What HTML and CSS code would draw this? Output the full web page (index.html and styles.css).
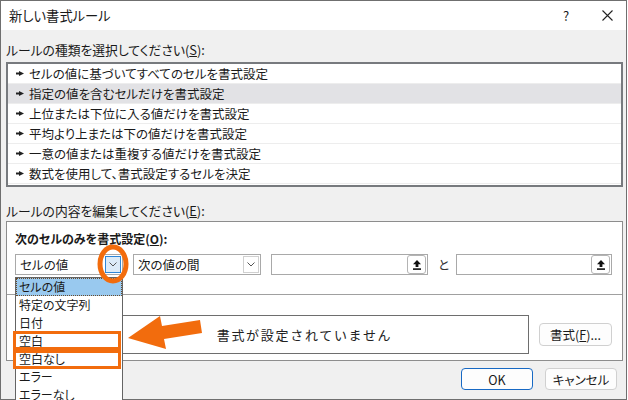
FILE: index.html
```html
<!DOCTYPE html>
<html lang="ja">
<head>
    <meta charset="UTF-8">
    <title>新しい書式ルール</title>
    <link rel="stylesheet" href="styles.css">
</head>
<body>

    <div class="window">
        <!-- タイトルバー -->
        <div class="titlebar">
            <span class="title">新しい書式ルール</span>
            <span class="help">?</span>
            <span class="close">
                <svg width="11" height="11" viewBox="0 0 11 11"><path d="M0.5 0.5L10.5 10.5M10.5 0.5L0.5 10.5" stroke="#222" stroke-width="1.1" fill="none"/></svg>
            </span>
        </div>

        <div class="content">
            <div class="label">ルールの種類を選択してください(<u>S</u>):</div>
            <ul class="rule-list">
                <li><svg class="bullet" width="8" height="5" viewBox="0 0 8 5"><rect x="0" y="1.5" width="4" height="2" fill="#222"/><path d="M3 0L8 2.5L3 5Z" fill="#222"/></svg>セルの値に基づいてすべてのセルを書式設定</li>
                <li class="selected"><svg class="bullet" width="8" height="5" viewBox="0 0 8 5"><rect x="0" y="1.5" width="4" height="2" fill="#222"/><path d="M3 0L8 2.5L3 5Z" fill="#222"/></svg>指定の値を含むセルだけを書式設定</li>
                <li><svg class="bullet" width="8" height="5" viewBox="0 0 8 5"><rect x="0" y="1.5" width="4" height="2" fill="#222"/><path d="M3 0L8 2.5L3 5Z" fill="#222"/></svg>上位または下位に入る値だけを書式設定</li>
                <li><svg class="bullet" width="8" height="5" viewBox="0 0 8 5"><rect x="0" y="1.5" width="4" height="2" fill="#222"/><path d="M3 0L8 2.5L3 5Z" fill="#222"/></svg>平均より上または下の値だけを書式設定</li>
                <li><svg class="bullet" width="8" height="5" viewBox="0 0 8 5"><rect x="0" y="1.5" width="4" height="2" fill="#222"/><path d="M3 0L8 2.5L3 5Z" fill="#222"/></svg>一意の値または重複する値だけを書式設定</li>
                <li><svg class="bullet" width="8" height="5" viewBox="0 0 8 5"><rect x="0" y="1.5" width="4" height="2" fill="#222"/><path d="M3 0L8 2.5L3 5Z" fill="#222"/></svg>数式を使用して、書式設定するセルを決定</li>
            </ul>

            <div class="label label-edit">ルールの内容を編集してください(<u>E</u>):</div>
            <div class="edit-panel">
                <div class="cond-title">次のセルのみを書式設定(<u>O</u>):</div>
                <div class="cond-row">
                    <div class="combo combo-type">
                        <span class="combo-text">セルの値</span>
                        <span class="drop drop-active"><svg width="8" height="5" viewBox="0 0 8 5"><path d="M0.5 0.5L4 4L7.5 0.5" stroke="#555" fill="none"/></svg></span>
                    </div>
                    <div class="combo combo-op">
                        <span class="combo-text">次の値の間</span>
                        <span class="drop"><svg width="8" height="5" viewBox="0 0 8 5"><path d="M0.5 0.5L4 4L7.5 0.5" stroke="#555" fill="none"/></svg></span>
                    </div>
                    <div class="ref-field ref-first">
                        <span class="ref-btn"><svg width="8" height="10" viewBox="0 0 8 10"><path d="M4 0L8 4.2H5.4V7H2.6V4.2H0Z" fill="#111"/><rect x="0" y="8.3" width="8" height="1.6" fill="#111"/></svg></span>
                    </div>
                    <span class="and">と</span>
                    <div class="ref-field ref-second">
                        <span class="ref-btn"><svg width="8" height="10" viewBox="0 0 8 10"><path d="M4 0L8 4.2H5.4V7H2.6V4.2H0Z" fill="#111"/><rect x="0" y="8.3" width="8" height="1.6" fill="#111"/></svg></span>
                    </div>
                </div>
                <div class="divider"></div>
                <div class="preview-row">
                    <span class="preview-label">プレビュー:</span>
                    <div class="preview-box">書式が設定されていません</div>
                    <button class="btn btn-format">書式(<u>F</u>)...</button>
                </div>
            </div>

            <div class="footer">
                <button class="btn btn-ok">OK</button>
                <button class="btn btn-cancel">キャンセル</button>
            </div>
        </div>
    </div>

    <!-- 開いたドロップダウン -->
    <ul class="dropdown">
        <li class="current">セルの値</li>
        <li>特定の文字列</li>
        <li>日付</li>
        <li>空白</li>
        <li>空白なし</li>
        <li>エラー</li>
        <li>エラーなし</li>
    </ul>

    <!-- 注釈 -->
    <div class="mark mark-blank"></div>
    <div class="mark mark-notblank"></div>
    <svg class="annot" width="628" height="400" viewBox="0 0 628 400">
        <ellipse cx="113" cy="264" rx="13" ry="17" fill="none" stroke="#f26c0d" stroke-width="5"/>
        <path d="M128 338L160 316L162 326L200 320L202 333L164 339L166 349Z" fill="#f26c0d"/>
    </svg>

</body>
</html>
```

FILE: styles.css
```css
* {
    margin: 0;
    padding: 0;
    box-sizing: border-box;
}

body {
    width: 628px;
    height: 400px;
    overflow: hidden;
    background: #fff;
    font-family: "Noto Sans CJK JP", "Noto Sans", sans-serif;
    font-size: 12.5px;
    color: #1a1a1a;
    font-feature-settings: "palt";
}

u {
    text-underline-offset: 1px;
}

.window {
    width: 627px;
    height: 400px;
    border: 1px solid #6f6f6f;
    background: #f0f0f0;
    display: flex;
    flex-direction: column;
}

/* タイトルバー */
.titlebar {
    height: 29px;
    flex-shrink: 0;
    background: #fff;
    display: flex;
    align-items: center;
    padding-left: 8px;
}

.title {
    flex: 1;
    font-size: 13.3px;
}

.help {
    width: 20px;
    margin-right: 21px;
    text-align: center;
    font-size: 13px;
}

.close {
    width: 20px;
    margin-right: 9px;
    display: flex;
    justify-content: center;
}

.content {
    flex: 1;
    padding: 12px 3px 0 5px;
}

.label {
    height: 16px;
    line-height: 16px;
    font-size: 12.8px;
}

/* ルールの種類 */
.rule-list {
    list-style: none;
    margin-top: 4px;
    height: 125px;
    border: 2px solid #777a7e;
    background: #fff;
}

.rule-list li {
    height: 20px;
    display: flex;
    align-items: center;
    padding-left: 8px;
    border-bottom: 1px solid #ededed;
}

.rule-list li.selected {
    background: #e2e2e5;
}

.bullet {
    margin-right: 5px;
    flex-shrink: 0;
}

.label-edit {
    margin-top: 16px;
}

/* ルールの内容 */
.edit-panel {
    margin-top: 2px;
    height: 140px;
    border: 1px solid #8d8d8d;
    background: #fff;
    padding: 9px 10px 0 8px;
}

.cond-title {
    font-weight: bold;
    height: 16px;
    line-height: 16px;
    font-size: 12px;
}

.cond-row {
    display: flex;
    align-items: center;
    margin-top: 7px;
    height: 21px;
}

.combo,
.ref-field {
    height: 21px;
    border: 1px solid #a9a9a9;
    background: #fff;
    display: flex;
    align-items: center;
    padding: 1px;
}

.combo-type {
    width: 108px;
    margin-right: 10px;
}

.combo-op {
    width: 128px;
    margin-right: 10px;
}

.combo-text {
    flex: 1;
    padding-left: 3px;
}

.drop {
    width: 16px;
    height: 17px;
    border: 1px solid #d0d0d0;
    display: flex;
    align-items: center;
    justify-content: center;
}

.drop-active {
    border-color: #2f86d6;
    background: #dcebf8;
}

.ref-field {
    justify-content: flex-end;
}

.ref-first {
    width: 157px;
}

.ref-second {
    width: 156px;
}

.ref-btn {
    width: 19px;
    height: 19px;
    border: 1px solid #b4b4b4;
    border-radius: 3px;
    display: flex;
    align-items: center;
    justify-content: center;
    background: #fff;
}

.and {
    width: 10px;
    margin: 0 8px 0 10px;
    color: #333;
}

.divider {
    margin-top: 19px;
    margin-left: -8px;
    margin-right: -10px;
    height: 1px;
    background: #a0a0a0;
}

.preview-row {
    display: flex;
    align-items: center;
    margin-top: 20px;
    height: 39px;
}

/* ドロップダウンの下に隠れている */
.preview-label {
    width: 65px;
    visibility: hidden;
}

.preview-box {
    width: 449px;
    height: 39px;
    border: 1px solid #6e6e6e;
    display: flex;
    align-items: center;
    justify-content: center;
    font-size: 13px;
    letter-spacing: 1.7px;
    font-feature-settings: normal;
    color: #222;
}

.btn {
    height: 22px;
    border: 1px solid #d0d0d0;
    border-radius: 4px;
    background: #fdfdfd;
    font-family: inherit;
    font-size: 12.5px;
    color: #1a1a1a;
    font-feature-settings: "palt";
}

.btn-format {
    width: 73px;
    height: 23px;
    margin-left: 10px;
}

.footer {
    display: flex;
    justify-content: flex-end;
    margin-top: 7px;
    padding-right: 6px;
    gap: 12px;
}

.btn-ok,
.btn-cancel {
    width: 72px;
}

.btn-ok {
    border-color: #1769c4;
}

/* ドロップダウン */
.dropdown {
    position: absolute;
    left: 15px;
    top: 277px;
    width: 108px;
    height: 130px;
    border: 1px solid #646464;
    background: #fff;
    list-style: none;
    font-size: 12px;
}

.dropdown li {
    height: 18px;
    line-height: 18px;
    padding-left: 3px;
}

.dropdown li.current {
    background: #99c9ef;
    outline: 1px dotted #6a4a2a;
    outline-offset: -1px;
}

/* 注釈 */
.mark {
    position: absolute;
    left: 13px;
    width: 108px;
    height: 19px;
    border: 3px solid #f26c0d;
}

.mark-blank {
    top: 331px;
}

.mark-notblank {
    top: 350px;
}

.annot {
    position: absolute;
    left: 0;
    top: 0;
    pointer-events: none;
}
```
